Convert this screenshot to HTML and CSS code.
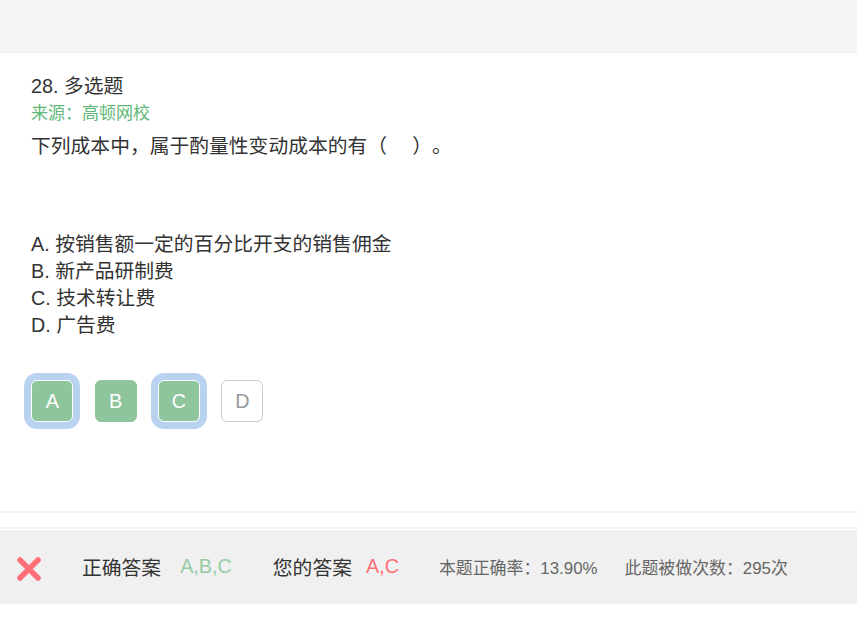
FILE: index.html
```html
<!DOCTYPE html>
<html lang="zh-CN">
<head>
<meta charset="utf-8">
<title>多选题</title>
<link rel="stylesheet" href="styles.css">
</head>
<body>
<header class="top-bar"></header>
<main class="question">
  <div class="q-title">28. 多选题</div>
  <div class="q-source">来源：高顿网校</div>
  <div class="q-stem">下列成本中，属于酌量性变动成本的有（&emsp;&nbsp;）。</div>
  <ul class="q-options">
    <li>A. 按销售额一定的百分比开支的销售佣金</li>
    <li>B. 新产品研制费</li>
    <li>C. 技术转让费</li>
    <li>D. 广告费</li>
  </ul>
  <div class="choices">
    <span class="choice correct picked">A</span>
    <span class="choice correct">B</span>
    <span class="choice correct picked">C</span>
    <span class="choice">D</span>
  </div>
</main>
<div class="divider"></div>
<footer class="result">
  <svg class="x-icon" viewBox="0 0 24 24" width="24" height="24" aria-hidden="true">
    <path d="M3 3L21 21M21 3L3 21" stroke="#ff6f78" stroke-width="5.5" stroke-linecap="round" fill="none"/>
  </svg>
  <span class="label first">正确答案</span>
  <span class="ans good">A,B,C</span>
  <span class="label second">您的答案</span>
  <span class="ans bad">A,C</span>
  <span class="stat first-stat">本题正确率：13.90%</span>
  <span class="stat second-stat">此题被做次数：295次</span>
</footer>
</body>
</html>
```
FILE: styles.css
```css
* { box-sizing: border-box; }
html, body { margin: 0; padding: 0; background: #fff; }
body {
  font-family: "Liberation Sans", "Noto Sans CJK SC", sans-serif;
  color: #333;
  font-size: 19.8px;
  text-spacing-trim: space-all;
  height: 617px;
  overflow: hidden;
}
.top-bar { height: 53px; background: #f5f5f5; border-bottom: 1px solid #f0f0f0; }
.question { padding: 20px 31px 0; height: 460px; border-bottom: 2px solid #f3f3f3; }
.q-title { line-height: 27px; }
.q-source { font-size: 17px; line-height: 27px; color: #5fb878; }
.q-stem { line-height: 32px; padding-top: 3px; height: 104px; }
.q-options { list-style: none; margin: 0; padding: 0; }
.q-options li { line-height: 27px; }
.choices { display: flex; gap: 21.3px; margin-top: 41px; padding-left: 0.4px; }
.choice {
  width: 42px; height: 42px;
  display: flex; align-items: center; justify-content: center;
  border: 1px solid #ccc; border-radius: 6px;
  color: #999; background: #fff;
}
.choice.correct { background: #8ec59d; border-color: #8ec59d; color: #fff; }
.choice.picked { border-color: #fff; box-shadow: 0 0 0 7px #b8d2f0; }
.divider { height: 16px; border-bottom: 2px solid #f3f3f3; }
.result {
  margin-top: 1px; height: 74px; background: #f0f0f0;
  display: flex; align-items: center; padding-left: 17px;
  padding-bottom: 2px;
}
.x-icon { flex: none; margin-top: 5px; }
.label { color: #333; }
.label.first { margin-left: 41px; }
.label.second { margin-left: 41px; }
.ans { margin-left: 19px; }
.ans.good { color: #96cba6; }
.ans.bad { margin-left: 14px; color: #ff6f78; }
.stat { font-size: 16.9px; color: #666; }
.first-stat { margin-left: 40px; }
.second-stat { margin-left: 27px; }
```
